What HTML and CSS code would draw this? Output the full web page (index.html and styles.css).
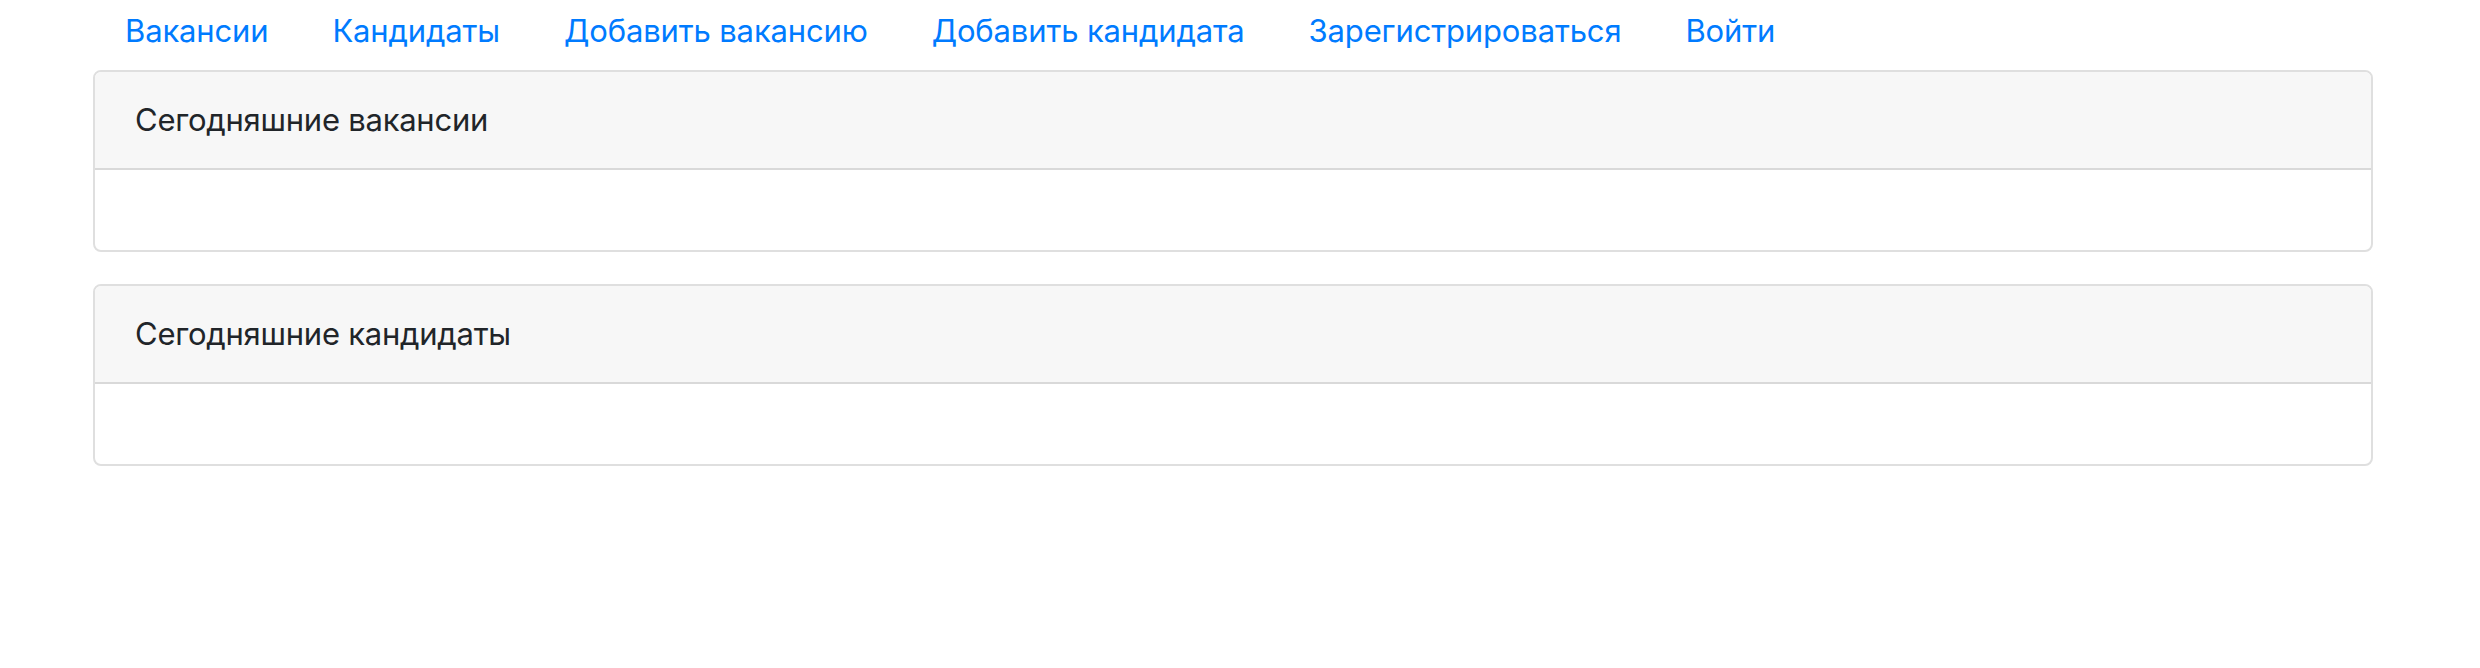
FILE: index.html
```html
<!DOCTYPE html>
<html lang="ru">
<head>
<meta charset="utf-8">
<title>Работа</title>
<link rel="stylesheet" href="styles.css">
</head>
<body>
<div class="container">
  <ul class="nav">
    <li><a class="nav-link" href="#">Вакансии</a></li>
    <li><a class="nav-link" href="#">Кандидаты</a></li>
    <li><a class="nav-link" href="#">Добавить вакансию</a></li>
    <li><a class="nav-link" href="#">Добавить кандидата</a></li>
    <li><a class="nav-link" href="#">Зарегистрироваться</a></li>
    <li><a class="nav-link" href="#">Войти</a></li>
  </ul>
  <div class="card">
    <div class="card-header">Сегодняшние вакансии</div>
    <div class="card-body"></div>
  </div>
  <div class="card card-next">
    <div class="card-header">Сегодняшние кандидаты</div>
    <div class="card-body"></div>
  </div>
</div>
</body>
</html>
```
FILE: styles.css
```css
* { box-sizing: border-box; }
html, body { margin: 0; padding: 0; background: #fff; }
body {
  font-family: Inter, "Noto Sans", "Liberation Sans", sans-serif;
  font-size: 31px;
  line-height: 48px;
  color: #212529;
}
.container {
  width: 2280px;
  margin-left: 93px;
}
.nav {
  display: flex;
  list-style: none;
  margin: 0;
  padding: 0;
}
.nav-link {
  display: block;
  padding: 7px 32px 15px;
  color: #007bff;
  text-decoration: none;
  letter-spacing: -0.15px;
}
.card {
  border: 2px solid #dfdfdf;
  border-radius: 8px;
  overflow: hidden;
  background: #fff;
}
.card-next { margin-top: 32px; }
.card-header {
  padding: 24px 40px;
  background: #f7f7f7;
  border-bottom: 2px solid #d9d9d9;
  letter-spacing: -0.25px;
}
.card-body {
  padding: 40px;
}
```
